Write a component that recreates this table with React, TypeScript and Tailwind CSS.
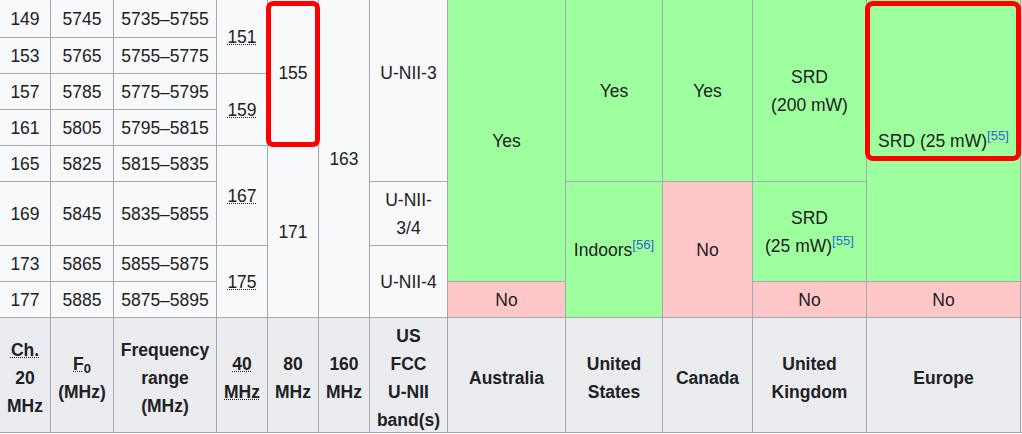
import type { ReactNode } from 'react';

function Cell({ children, className = '' }: { children?: ReactNode; className?: string }) {
    return (
        <div className={`flex items-center justify-center px-[7px] text-center ${className}`}>
            <div>{children}</div>
        </div>
    );
}

function Data({ children, className = '' }: { children?: ReactNode; className?: string }) {
    return <Cell className={`bg-[#f8f9fa] ${className}`}>{children}</Cell>;
}

function Yes({ children = 'Yes', className = '' }: { children?: ReactNode; className?: string }) {
    return <Cell className={`bg-[#9eff9e] ${className}`}>{children}</Cell>;
}

function No({ children = 'No', className = '' }: { children?: ReactNode; className?: string }) {
    return <Cell className={`bg-[#ffc7c7] ${className}`}>{children}</Cell>;
}

function Head({ children }: { children?: ReactNode }) {
    return <Cell className="bg-[#eaecf0] pt-[6px] font-bold whitespace-nowrap">{children}</Cell>;
}

function Ref({ n }: { n: number }) {
    return <sup className="text-[#3366cc]">[{n}]</sup>;
}

function Abbr({ children }: { children: ReactNode }) {
    return <span className="underline decoration-dotted decoration-1">{children}</span>;
}

// one row per 20 MHz channel
const channels = [
    ['149', '5745', '5735–5755'],
    ['153', '5765', '5755–5775'],
    ['157', '5785', '5775–5795'],
    ['161', '5805', '5795–5815'],
    ['165', '5825', '5815–5835'],
    ['169', '5845', '5835–5855'],
    ['173', '5865', '5855–5875'],
    ['177', '5885', '5875–5895'],
];

function ChannelCells({ i }: { i: number }) {
    const [ch, f0, range] = channels[i];
    return (
        <>
            <Data>{ch}</Data>
            <Data>{f0}</Data>
            <Data>{range}</Data>
        </>
    );
}

export default function App() {
    return (
        <div className="relative h-[434px] w-[1022px] overflow-hidden bg-white font-['Liberation_Sans',Arial,sans-serif] text-[17.5px] leading-[28px] text-[#202122]">
            <div className="-mt-[36px] grid w-max grid-cols-[50px_62px_102px_50px_50px_50px_77px_117px_96px_89px_113px_153px_60px] grid-rows-[35px_37px_35px_35px_35px_35px_63px_35px_35px_114px] gap-px border-b border-[#a2a9b1] bg-[#a2a9b1]">
                {/* previous row, scrolled out of view; only U-NII-3 reaches down */}
                <Data />
                <Data />
                <Data />
                <Data />
                <Data />
                <Data />
                <Data className="row-span-6">U-NII-3</Data>
                <Yes>{null}</Yes>
                <Yes>{null}</Yes>
                <Yes>{null}</Yes>
                <Yes>{null}</Yes>
                <Yes>{null}</Yes>
                <No className="row-span-9">{null}</No>

                {/* 149 */}
                <ChannelCells i={0} />
                <Data className="row-span-2"><Abbr>151</Abbr></Data>
                <Data className="row-span-4">155</Data>
                <Data className="row-span-8">163</Data>
                <Yes className="row-span-7" />
                <Yes className="row-span-5" />
                <Yes className="row-span-5" />
                <Yes className="row-span-5">SRD<br />(200 mW)</Yes>
                <Yes className="row-span-7">SRD (25 mW)<Ref n={55} /></Yes>

                {/* 153 */}
                <ChannelCells i={1} />

                {/* 157 */}
                <ChannelCells i={2} />
                <Data className="row-span-2"><Abbr>159</Abbr></Data>

                {/* 161 */}
                <ChannelCells i={3} />

                {/* 165 */}
                <ChannelCells i={4} />
                <Data className="row-span-2"><Abbr>167</Abbr></Data>
                <Data className="row-span-4">171</Data>

                {/* 169 */}
                <ChannelCells i={5} />
                <Data>U-NII-<br />3/4</Data>
                <Yes className="row-span-3">Indoors<Ref n={56} /></Yes>
                <No className="row-span-3" />
                <Yes className="row-span-2">SRD<br />(25 mW)<Ref n={55} /></Yes>

                {/* 173 */}
                <ChannelCells i={6} />
                <Data className="row-span-2"><Abbr>175</Abbr></Data>
                <Data className="row-span-2">U-NII-4</Data>

                {/* 177 */}
                <ChannelCells i={7} />
                <No />
                <No />
                <No />

                {/* footer header */}
                <Head><Abbr>Ch.</Abbr><br />20<br />MHz</Head>
                <Head><Abbr>F</Abbr><sub>0</sub><br />(MHz)</Head>
                <Head>Frequency<br />range<br />(MHz)</Head>
                <Head><Abbr>40<br />MHz</Abbr></Head>
                <Head>80<br />MHz</Head>
                <Head>160<br />MHz</Head>
                <Head>US<br />FCC<br />U-NII<br />band(s)</Head>
                <Head>Australia</Head>
                <Head>United<br />States</Head>
                <Head>Canada</Head>
                <Head>United<br />Kingdom</Head>
                <Head>Europe</Head>
                <Head></Head>
            </div>

            {/* highlight boxes */}
            <div className="pointer-events-none absolute left-[266px] top-px h-[146px] w-[54px] rounded-[7px] border-[5px] border-[#ff0000]" />
            <div className="pointer-events-none absolute left-[865px] top-px h-[160px] w-[156px] rounded-[8px] border-[5px] border-[#ff0000]" />
        </div>
    );
}
